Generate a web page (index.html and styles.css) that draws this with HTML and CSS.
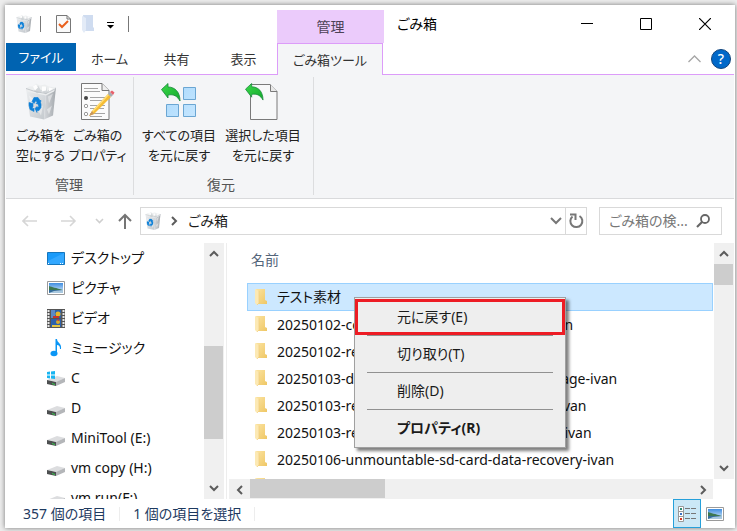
FILE: index.html
```
<!DOCTYPE html>
<html lang="ja">
<head>
    <meta charset="UTF-8">
    <meta name="viewport" content="width=device-width, initial-scale=1.0">
    <title>ごみ箱</title>
    <link rel="stylesheet" href="styles.css">
</head>
<body>

    <!-- Shared icons -->
    <svg class="icon-defs" aria-hidden="true">
        <defs>
            <linearGradient id="binFront" x1="0" y1="0" x2="1" y2="1">
                <stop offset="0" stop-color="#eceef0"/>
                <stop offset="1" stop-color="#c3c8cd"/>
            </linearGradient>
            <linearGradient id="binSide" x1="0" y1="0" x2="1" y2="0">
                <stop offset="0" stop-color="#d5d8dc"/>
                <stop offset="1" stop-color="#a4a9ae"/>
            </linearGradient>
            <linearGradient id="folderFill" x1="0" y1="0" x2="1" y2="1">
                <stop offset="0" stop-color="#fbe3a0"/>
                <stop offset="1" stop-color="#efc765"/>
            </linearGradient>
            <linearGradient id="greenFill" x1="0" y1="0" x2="1" y2="1">
                <stop offset="0" stop-color="#3bd84a"/>
                <stop offset="1" stop-color="#12a92c"/>
            </linearGradient>
            <linearGradient id="tileFill" x1="0" y1="0" x2="1" y2="1">
                <stop offset="0" stop-color="#a9d9fc"/>
                <stop offset="1" stop-color="#c6e6ff"/>
            </linearGradient>
            <linearGradient id="skyFill" x1="0" y1="0" x2="0" y2="1">
                <stop offset="0" stop-color="#3f8de0"/>
                <stop offset="1" stop-color="#e2f1fc"/>
            </linearGradient>
        </defs>
        <symbol id="bin" viewBox="0 0 32 36">
            <path d="M1 5l20 4-2 27-14-3z" fill="url(#binFront)"/>
            <path d="M21 9l10-5-3 28-9 4z" fill="url(#binSide)"/>
            <path d="M1 5l3-2 4 0 3-3 4 2 5-1 4 2 7 1-2 4-8 4-10-2-9-2z" fill="#eceeef"/>
            <path d="M4 4l5 3 4-5 3 5 5-4 1 5 5-4-6 7-4-3-5 2-3-3z" fill="#d2d6d9"/>
            <path d="M8 3l3-2 2 3-3 3zM17 3l4 0 0 4-4 1zM24 4l4 1-4 3z" fill="#fdfdfd"/>
            <path d="M1 5l9 3 11 2 10-5" fill="none" stroke="#b9bec3" stroke-width=".8"/>
            <path d="M4 12l5 4-3 5zM12 25l6-3-2 10zM23 13l5-3-4 10zM22 26l5-4-3 9z" fill="#fff" opacity=".45"/>
            <path d="M7 18l2-4 4 0 2 3 1 0-1 4-4-1 1-1-1-2-2 3zM4 19l4 1 0 3-1 2 2 0 0 3-4-2-1-4zM10 25l2-2 0 1 2-1-1-2 3-1 0 4-2 3-2 0 0 2z" fill="#0d80d8" stroke="#0d80d8" stroke-width=".6"/>
        </symbol>
        <symbol id="folder" viewBox="0 0 12 17">
            <path d="M1 0h9v11l2 1v3H3z" fill="url(#folderFill)"/>
            <path d="M0 0l4 2v12l-2 2-2-2z" fill="#fce9b4"/>
            <path d="M4 2v12l-2 2" fill="none" stroke="#f0cd7b" stroke-width=".7"/>
        </symbol>
        <symbol id="photo" viewBox="0 0 18 14">
            <path d="M.5.5h17v13H.5z" fill="#fff" stroke="#9a9a9a"/>
            <path d="M2 2h14v10H2z" fill="url(#skyFill)"/>
            <path d="M2 5c3 1 7 2 14 4v1H2z" fill="#3d7750"/>
            <path d="M2 9h14v3H2z" fill="#356d9a"/>
            <path d="M7 10l9-1v3H2z" fill="#a9c8df"/>
        </symbol>
        <symbol id="drive" viewBox="0 0 18 10">
            <path d="M0 4L10 0l8 2-8 4z" fill="#dcdddf"/>
            <path d="M0 4l9 2v4L0 8z" fill="#4c4f50"/>
            <path d="M9 6l9-4v4l-9 4z" fill="#b4b6b9"/>
            <path d="M5 7l3 1v1L5 8z" fill="#35c84b"/>
        </symbol>
        <symbol id="up" viewBox="0 0 10 7">
            <path d="M1 6l4-4 4 4" fill="none" stroke="#5c5c5c" stroke-width="2"/>
        </symbol>
        <symbol id="down" viewBox="0 0 10 7">
            <path d="M1 1l4 4 4-4" fill="none" stroke="#5c5c5c" stroke-width="2"/>
        </symbol>
        <symbol id="left" viewBox="0 0 7 10">
            <path d="M6 1L2 5l4 4" fill="none" stroke="#5c5c5c" stroke-width="2"/>
        </symbol>
        <symbol id="right" viewBox="0 0 7 10">
            <path d="M1 1l4 4-4 4" fill="none" stroke="#5c5c5c" stroke-width="2"/>
        </symbol>
        <symbol id="undo" viewBox="0 0 20 19">
            <path d="M.5 6.500L7 .5v3.500c7 0 12 5 12 14-3-5-6-7-12-6v3z" fill="url(#greenFill)" stroke="#16873a" stroke-width=".8"/>
        </symbol>
    </svg>

    <div class="window">

        <!-- Title bar -->
        <header class="title-bar">
            <div class="quick-access">
                <svg class="quick-bin" width="16" height="18"><use href="#bin"/></svg>
                <span class="quick-line"></span>
                <button class="quick-check" aria-label="プロパティ">
                    <svg width="15" height="18" viewBox="0 0 15 18">
                        <path d="M.5.5H11l3.500 3.500v13.500H.5z" fill="#fafafa" stroke="#777"/>
                        <path d="M11 .5V4h3.500" fill="none" stroke="#777"/>
                        <path d="M3 9l3 3 6-6" fill="none" stroke="#e9601d" stroke-width="2"/>
                    </svg>
                </button>
                <button class="quick-folder" aria-label="新しいフォルダー">
                    <svg width="12" height="18" viewBox="0 0 12 18">
                        <path d="M1 0h10v12l1 1v3H3z" fill="#cfdcf0"/>
                        <path d="M0 1l4 2v12l-2 3-2-3z" fill="#e3ebf7"/>
                    </svg>
                </button>
                <button class="quick-more" aria-label="カスタマイズ">
                    <svg width="8" height="7" viewBox="0 0 8 7"><path d="M0 0h7v1H0zM0 3h7L3.500 6.500z" fill="#000"/></svg>
                </button>
                <span class="quick-line"></span>
            </div>
            <div class="context-title">管理</div>
            <h1 class="title">ごみ箱</h1>
            <div class="window-buttons">
                <button aria-label="最小化"><svg width="12" height="12"><path d="M0 5.500h12" stroke="#000"/></svg></button>
                <button aria-label="最大化"><svg width="12" height="12"><path d="M.5.5h11v11H.5z" fill="none" stroke="#000"/></svg></button>
                <button aria-label="閉じる"><svg width="12" height="12"><path d="M0 0l12 12M12 0L0 12" stroke="#000" stroke-width="1.200"/></svg></button>
            </div>
        </header>

        <!-- Ribbon tabs -->
        <nav class="tabs">
            <button class="tab tab-file">ファイル</button>
            <button class="tab">ホーム</button>
            <button class="tab">共有</button>
            <button class="tab">表示</button>
            <button class="tab tab-active">ごみ箱ツール</button>
            <div class="tabs-end">
                <button aria-label="リボンの最小化"><svg width="13" height="8"><path d="M.5 7l6-6 6 6" fill="none" stroke="#a6a6a6" stroke-width="1.300"/></svg></button>
                <button class="help" aria-label="ヘルプ">?</button>
            </div>
        </nav>

        <!-- Ribbon -->
        <section class="ribbon">
            <div class="group">
                <div class="group-buttons">
                    <button class="big-button">
                        <svg width="32" height="37"><use href="#bin"/></svg>
                        <span>ごみ箱を<br>空にする</span>
                    </button>
                    <button class="big-button">
                        <svg width="34" height="37" viewBox="0 0 34 37">
                            <path d="M.5.500H21l7 7v29H.5z" fill="#fbfbfb" stroke="#777"/>
                            <path d="M21 .5v7h7" fill="#eee" stroke="#777"/>
                            <path d="M3 5.500h14M3 8.500h16M9 14.500h16M9 17.500h12M9 22.500h15M9 25.500h14M9 30.500h15M9 33.500h12" stroke="#a5a5a5"/>
                            <circle cx="5" cy="15" r="2" fill="#444"/>
                            <circle cx="5" cy="23" r="1.700" fill="#fff" stroke="#999"/>
                            <circle cx="5" cy="31" r="1.700" fill="#fff" stroke="#999"/>
                            <path d="M11 28L27 11l3 3-17 17-5 2z" fill="#f6bd35"/>
                            <path d="M11 28L27 11l1 1-16 17z" fill="#ffdf78"/>
                            <path d="M8 33l3-5 2 3z" fill="#c9975e"/>
                            <path d="M27 11l2-2 3 3-2 2z" fill="#a6adb3"/>
                            <path d="M29 9l2-1.500 2.500 2L32 12z" fill="#e8606b"/>
                        </svg>
                        <span>ごみ箱の<br>プロパティ</span>
                    </button>
                </div>
                <div class="group-label">管理</div>
            </div>
            <div class="group group-restore">
                <div class="group-buttons">
                    <button class="big-button">
                        <svg width="36" height="37" viewBox="0 0 36 37">
                            <path d="M22.500 4.500h12v12h-12zM5.500 21.500h12v12h-12zM22.500 21.500h12v12h-12z" fill="url(#tileFill)" stroke="#6ba6d3"/>
                            <use href="#undo" width="20" height="19"/>
                        </svg>
                        <span>すべての項目<br>を元に戻す</span>
                    </button>
                    <button class="big-button">
                        <svg width="36" height="37" viewBox="0 0 36 37">
                            <path d="M5.500 1.500H25l7 7v28H5.500z" fill="#f7f8f9" stroke="#7a7a7a"/>
                            <path d="M25.500 1.500v7H32" fill="#e9e9e9" stroke="#7a7a7a"/>
                            <use href="#undo" width="19" height="18"/>
                        </svg>
                        <span>選択した項目<br>を元に戻す</span>
                    </button>
                </div>
                <div class="group-label">復元</div>
            </div>
        </section>

        <!-- Address bar -->
        <div class="address-bar">
            <div class="nav-buttons">
                <button aria-label="戻る"><svg width="16" height="12"><path d="M1 6h14M6 1L1 6l5 5" fill="none" stroke="#d6d6d6" stroke-width="1.600"/></svg></button>
                <button aria-label="進む"><svg width="16" height="12"><path d="M0 6h14M9 1l5 5-5 5" fill="none" stroke="#d6d6d6" stroke-width="1.600"/></svg></button>
                <button class="nav-recent" aria-label="最近表示した場所"><svg width="9" height="6"><path d="M1 1l3.500 3.500L8 1" fill="none" stroke="#cfcfcf" stroke-width="1.600"/></svg></button>
                <button class="nav-up" aria-label="上へ"><svg width="14" height="16"><path d="M7 16V2M1 8l6-6 6 6" fill="none" stroke="#757575" stroke-width="2"/></svg></button>
            </div>
            <div class="address">
                <svg width="16" height="18"><use href="#bin"/></svg>
                <svg width="7" height="10"><use href="#right"/></svg>
                <a href="#">ごみ箱</a>
                <button class="address-drop" aria-label="履歴"><svg width="12" height="8"><path d="M1 1l5 5 5-5" fill="none" stroke="#777" stroke-width="2"/></svg></button>
                <button class="refresh" aria-label="最新の情報に更新">
                    <svg width="15" height="16" viewBox="0 0 15 16">
                        <path d="M10.500 3A6 6 0 1 1 3.500 3.500" fill="none" stroke="#777" stroke-width="2"/>
                        <path d="M1 1.500h5.500v5.500" fill="none" stroke="#777" stroke-width="2"/>
                    </svg>
                </button>
            </div>
            <div class="search">
                <input type="text" aria-label="ごみ箱の検索" placeholder="ごみ箱の検...">
                <svg width="14" height="14" viewBox="0 0 14 14">
                    <circle cx="9" cy="5" r="4" fill="none" stroke="#666" stroke-width="1.800"/>
                    <path d="M6 8l-5 5" stroke="#666" stroke-width="2.200"/>
                </svg>
            </div>
        </div>

        <div class="content">

            <!-- Navigation pane -->
            <aside class="sidebar">
                <ul class="places">
                    <li><a href="#">
                        <svg width="18" height="13"><path d="M.5.5h17v12H.5z" fill="#1a9bfa" stroke="#1576bd"/><path d="M1 9L17 1v11H1z" fill="#33a8ff"/><path d="M1 11.500h1M13 11.500h1M15 11.500h1" stroke="#fff"/></svg>
                        デスクトップ</a></li>
                    <li><a href="#">
                        <svg width="18" height="14"><use href="#photo"/></svg>
                        ピクチャ</a></li>
                    <li><a href="#">
                        <svg width="18" height="19" viewBox="0 0 18 19">
                            <path d="M0 0h18v19H0z" fill="#555"/>
                            <path d="M1.500 1v18M16.500 1v18" stroke="#e8e8e8" stroke-width="2" stroke-dasharray="2 1"/>
                            <path d="M4 1h10v8H4zM4 10h10v8H4z" fill="#2c62ad"/>
                            <path d="M4 1h4v8H4z" fill="#5c8ac6"/>
                            <circle cx="11" cy="5" r="2.500" fill="#e7b72c"/>
                            <path d="M6 7h6v2H6z" fill="#c8352c"/>
                            <circle cx="11" cy="13" r="2" fill="#d6ab30"/>
                            <path d="M5 16h8v2H5z" fill="#e3c545"/>
                            <path d="M9 11l3-1v2z" fill="#cf3b2b"/>
                        </svg>
                        ビデオ</a></li>
                    <li><a href="#">
                        <svg width="18" height="18" viewBox="0 0 18 18"><ellipse cx="7" cy="14.500" rx="3.500" ry="2.700" fill="#0b96f5"/><path d="M8.500 15V0H10c0 4 5 4 4 10h-1c0-3-1-4-3-4v9z" fill="#0b96f5"/></svg>
                        ミュージック</a></li>
                    <li><a href="#">
                        <svg width="18" height="15" viewBox="0 0 18 15"><use href="#drive" y="5" width="18" height="10"/><path d="M0 1l3-.5v3H0zM4 .5L8 0v3.500H4zM0 4.500h3v3L0 7zM4 4.500h4V8l-4-.5z" fill="#19b5f1"/></svg>
                        C</a></li>
                    <li><a href="#"><svg class="drive" width="18" height="10"><use href="#drive"/></svg>D</a></li>
                    <li><a href="#"><svg class="drive" width="18" height="10"><use href="#drive"/></svg>MiniTool (E:)</a></li>
                    <li><a href="#"><svg class="drive" width="18" height="10"><use href="#drive"/></svg>vm copy (H:)</a></li>
                    <li><a href="#"><svg class="drive" width="18" height="10"><use href="#drive"/></svg>vm run(F:)</a></li>
                </ul>
                <div class="scroll-y">
                    <button aria-label="上へスクロール"><svg width="10" height="7"><use href="#up"/></svg></button>
                    <div class="track"><div class="thumb thumb-places"></div></div>
                    <button aria-label="下へスクロール"><svg width="10" height="7"><use href="#down"/></svg></button>
                </div>
            </aside>

            <!-- File list -->
            <main class="files">
                <div class="files-view">
                    <div class="files-list">
                        <button class="column-name">名前</button>
                        <ul>
                            <li class="selected"><a href="#"><svg width="12" height="17"><use href="#folder"/></svg>テスト素材</a></li>
                            <li><a href="#"><svg width="12" height="17"><use href="#folder"/></svg>20250102-computer-recovery-data-tools-ivan</a></li>
                            <li><a href="#"><svg width="12" height="17"><use href="#folder"/></svg>20250102-recover-word-file-ivan</a></li>
                            <li><a href="#"><svg width="12" height="17"><use href="#folder"/></svg>20250103-data-recovery-from-network-storage-ivan</a></li>
                            <li><a href="#"><svg width="12" height="17"><use href="#folder"/></svg>20250103-recover-photos-from-sd-camera-ivan</a></li>
                            <li><a href="#"><svg width="12" height="17"><use href="#folder"/></svg>20250103-recover-videos-from-usb-camera-ivan</a></li>
                            <li><a href="#"><svg width="12" height="17"><use href="#folder"/></svg>20250106-unmountable-sd-card-data-recovery-ivan</a></li>
                            <li><a href="#"><svg width="12" height="17"><use href="#folder"/></svg></a></li>
                        </ul>
                    </div>
                    <div class="scroll-y">
                        <button aria-label="上へスクロール"><svg width="10" height="7"><use href="#up"/></svg></button>
                        <div class="track"><div class="thumb thumb-files"></div></div>
                        <button aria-label="下へスクロール"><svg width="10" height="7"><use href="#down"/></svg></button>
                    </div>
                </div>
                <div class="scroll-x">
                    <button aria-label="左へスクロール"><svg width="7" height="10"><use href="#left"/></svg></button>
                    <div class="track"><div class="thumb thumb-width"></div></div>
                    <button aria-label="右へスクロール"><svg width="7" height="10"><use href="#right"/></svg></button>
                </div>

                <!-- Context menu -->
                <div class="context-menu" role="menu">
                    <button class="highlight" role="menuitem">元に戻す(E)</button>
                    <button role="menuitem">切り取り(T)</button>
                    <button role="menuitem">削除(D)</button>
                    <button class="default" role="menuitem">プロパティ(R)</button>
                </div>
            </main>
        </div>

        <!-- Status bar -->
        <footer class="status-bar">
            <span>357 個の項目</span>
            <span>1 個の項目を選択</span>
            <div class="view-buttons">
                <button class="view-active" aria-label="詳細">
                    <svg width="18" height="16" viewBox="0 0 18 16">
                        <path d="M.5.500h5v15h-5zM0 5.500h6M0 10.500h6" fill="#fff" stroke="#999"/>
                        <path d="M7 2.500h5M13 2.500h5M7 7.500h5M13 7.500h5M7 12.500h5M13 12.500h5" stroke="#777"/>
                        <path d="M2 2h2v2H2z" fill="#2f8a72"/><path d="M2 7h2v2H2z" fill="#3b73c4"/><path d="M2 12h2v2H2z" fill="#d53420"/>
                    </svg>
                </button>
                <button aria-label="大アイコン"><svg width="18" height="14"><use href="#photo"/></svg></button>
            </div>
        </footer>
    </div>

</body>
</html>
```
FILE: styles.css
```
* {
    box-sizing: border-box;
}
body {
    margin: 0;
    height: 100vh;
    padding: 5px 2px 3px 5px;
    display: flex;
    background-color: #ededed;
    color: #1a1a1a;
    font-family: "Noto Sans", "Noto Sans CJK JP", sans-serif;
    font-size: 14px;
    line-height: 20px;
    font-feature-settings: "palt";
}
button,
input {
    font: inherit;
    font-feature-settings: inherit;
    color: inherit;
    background: none;
    border: none;
    padding: 0;
    margin: 0;
}
a {
    color: inherit;
    text-decoration: none;
}
ul {
    list-style: none;
    margin: 0;
    padding: 0;
}
svg {
    display: block;
    flex-shrink: 0;
}
.icon-defs {
    position: absolute;
    width: 0;
    height: 0;
}
.window {
    flex: 1;
    min-width: 0;
    display: flex;
    flex-direction: column;
    padding: 0 1px;
    background-color: #fff;
    box-shadow: 0 0 5px rgba(0, 0, 0, 0.5);
}

/* Title bar */
.title-bar {
    display: flex;
    height: 38px;
}
.quick-access {
    width: 271px;
    display: flex;
    align-items: center;
    padding-left: 10px;
}
.quick-bin {
    margin-right: 8px;
}
.quick-line {
    width: 1px;
    height: 16px;
    background-color: #777;
}
.quick-check {
    margin-left: 15px;
}
.quick-folder {
    margin-left: 11px;
}
.quick-more {
    margin: 3px 13px 0;
}
.context-title {
    width: 107px;
    margin-top: 5px;
    line-height: 34px;
    text-align: center;
    color: #4c4256;
    background-color: #ebcbfb;
}
.title {
    flex: 1;
    margin: 0;
    padding-left: 13px;
    font-size: 14px;
    font-weight: normal;
    line-height: 38px;
    color: #000;
}
.window-buttons {
    display: flex;
}
.window-buttons button {
    width: 59px;
    display: flex;
    justify-content: center;
    align-items: center;
}

/* Ribbon tabs */
.tabs {
    display: flex;
    height: 32px;
    border-bottom: 1px solid #dc9cf9;
}
.tab {
    width: 67px;
    font-size: 13px;
    white-space: nowrap;
    color: #333;
}
.tab-file {
    width: 70px;
    height: 28px;
    color: #fff;
    background-color: #0063b1;
}
.tab-active {
    width: 106px;
    height: 32px;
    background-color: #f4f5f7;
    border: 1px solid #dc9cf9;
    border-bottom: none;
}
.tabs-end {
    margin-left: auto;
    display: flex;
    align-items: center;
    gap: 10px;
    padding-right: 3px;
}
.help {
    width: 20px;
    height: 20px;
    border: 1px solid #11457d;
    border-radius: 50%;
    color: #fff;
    background-color: #0068c9;
    line-height: 18px;
    font-weight: 500;
}

/* Ribbon */
.ribbon {
    display: flex;
    height: 124px;
    padding: 2px 0 3px;
    background-color: #f4f5f7;
    border-bottom: 1px solid #d9dadc;
}
.group {
    display: flex;
    flex-direction: column;
    padding: 6px 7px 0 6px;
    border-right: 1px solid #dcdddf;
}
.group-restore {
    padding: 6px 8px 0 3px;
}
.group-buttons {
    display: flex;
}
.big-button {
    width: 57px;
    display: flex;
    flex-direction: column;
    align-items: center;
    gap: 5px;
    font-size: 13px;
    white-space: nowrap;
    color: #222;
}
.group-restore .big-button {
    width: 84px;
}
.group-label {
    margin-top: 10px;
    text-align: center;
    color: #555;
}

/* Address bar */
.address-bar {
    display: flex;
    align-items: center;
    height: 44px;
    padding: 0 12px 0 16px;
}
.nav-buttons {
    display: flex;
    align-items: center;
    width: 118px;
    gap: 23px;
}
.nav-recent {
    margin-left: -5px;
}
.nav-up {
    margin-left: -9px;
}
.address {
    flex: 1;
    display: flex;
    align-items: center;
    height: 28px;
    padding-left: 4px;
    gap: 10px;
    border: 1px solid #d9d9d9;
}
.address-drop {
    margin-left: auto;
    margin-right: -7px;
}
.refresh {
    display: flex;
    align-items: center;
    height: 26px;
    padding: 0 2px 0 3px;
    border-left: 1px solid #d9d9d9;
}
.search {
    width: 123px;
    height: 28px;
    margin-left: 12px;
    display: flex;
    align-items: center;
    padding: 0 11px 0 9px;
    border: 1px solid #d9d9d9;
}
.search input {
    flex: 1;
    min-width: 0;
}
.search input::placeholder {
    color: #777;
    opacity: 1;
}

/* Panes */
.content {
    flex: 1;
    min-height: 0;
    display: flex;
}
.sidebar {
    width: 221px;
    display: flex;
    padding-right: 2px;
    border-right: 1px solid #ededed;
}
.places {
    flex: 1;
    min-width: 0;
    overflow: hidden;
}
.places a {
    display: flex;
    align-items: center;
    gap: 6px;
    height: 30px;
    padding-left: 41px;
    white-space: nowrap;
    color: #111;
}
.drive {
    margin-top: 5px;
}
.files {
    flex: 1;
    min-width: 0;
    position: relative;
    display: flex;
    flex-direction: column;
    padding-left: 2px;
}
.files-view {
    flex: 1;
    min-height: 0;
    display: flex;
}
.files-list {
    flex: 1;
    min-width: 0;
    overflow: hidden;
    padding: 6px 1px 0 18px;
}
.column-name {
    display: block;
    height: 22px;
    margin: 0 0 12px 4px;
    color: #54657a;
}
.files-list a {
    display: flex;
    align-items: center;
    gap: 10px;
    height: 27px;
    padding-left: 8px;
    white-space: nowrap;
    color: #111;
}
.files-list .selected a {
    height: 28px;
    padding-left: 7px;
    background-color: #cce8ff;
    border: 1px solid #99d1ff;
}

/* Scroll bars */
.scroll-y,
.scroll-x {
    display: flex;
    background-color: #f0f0f0;
}
.scroll-y {
    width: 20px;
    flex-direction: column;
}
.scroll-x {
    height: 20px;
    margin-right: 21px;
}
.scroll-y button,
.scroll-x button {
    width: 20px;
    height: 21px;
    display: flex;
    justify-content: center;
    align-items: center;
}
.track {
    flex: 1;
}
.thumb {
    width: 19px;
    height: 19px;
    background-color: #cdcdcd;
}
.thumb-places {
    height: 93px;
    margin-top: 82px;
}
.thumb-files {
    height: 21px;
}
.thumb-width {
    width: 135px;
    margin-left: 1px;
}

/* Context menu */
.context-menu {
    position: absolute;
    top: 54px;
    left: 127px;
    width: 212px;
    padding: 1px 0;
    display: flex;
    flex-direction: column;
    background-color: #eee;
    border: 1px solid #a0a0a0;
    box-shadow: 3px 3px 3px rgba(0, 0, 0, 0.5);
}
.context-menu button {
    height: 37px;
    margin: 0 12px;
    padding-left: 30px;
    text-align: left;
    border-top: 1px solid #919191;
}
.context-menu .highlight {
    height: 36px;
    margin: 0;
    padding-left: 39px;
    border: 3px solid #ed1c24;
}
.context-menu .default {
    font-weight: bold;
}

/* Status bar */
.status-bar {
    display: flex;
    align-items: center;
    height: 29px;
    padding-left: 17px;
    color: #1e3a5f;
}
.status-bar span {
    padding-right: 13px;
    margin-right: 13px;
    border-right: 1px solid #ededed;
    line-height: 14px;
}
.view-buttons {
    margin-left: auto;
    display: flex;
    padding-right: 5px;
}
.view-buttons button {
    width: 28px;
    height: 29px;
    display: flex;
    justify-content: center;
    align-items: center;
}
.view-buttons .view-active {
    background-color: #cbe8f6;
    border: 1px solid #26a0da;
}
```
